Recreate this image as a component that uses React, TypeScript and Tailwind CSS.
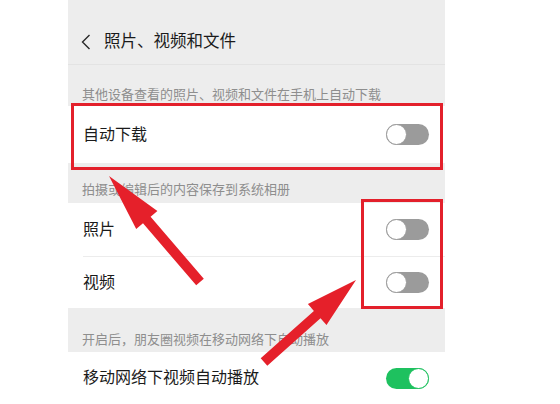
import React from "react";

type Pt = [number, number];

// polygon for a straight annotation arrow from tail to tip
const arrowPoints = (tail: Pt, tip: Pt, shaft = 10, headLen = 58, headW = 28) => {
  const dx = tip[0] - tail[0];
  const dy = tip[1] - tail[1];
  const len = Math.hypot(dx, dy);
  const ux = dx / len;
  const uy = dy / len;
  const nx = -uy;
  const ny = ux;
  const bx = tip[0] - ux * headLen;
  const by = tip[1] - uy * headLen;
  const pts: Pt[] = [
    [tail[0] + (nx * shaft) / 2, tail[1] + (ny * shaft) / 2],
    [bx + (nx * shaft) / 2, by + (ny * shaft) / 2],
    [bx + (nx * headW) / 2, by + (ny * headW) / 2],
    tip,
    [bx - (nx * headW) / 2, by - (ny * headW) / 2],
    [bx - (nx * shaft) / 2, by - (ny * shaft) / 2],
    [tail[0] - (nx * shaft) / 2, tail[1] - (ny * shaft) / 2],
  ];
  return pts.map((p) => `${p[0].toFixed(1)},${p[1].toFixed(1)}`).join(" ");
};

const Toggle = ({ on = false }: { on?: boolean }) =>
  on ? (
    <div className="flex h-[21px] w-[43px] items-center justify-end rounded-full bg-[#1ec15f]">
      <div className="h-[21px] w-[21px] rounded-full border border-[#1ec15f] bg-white" />
    </div>
  ) : (
    <div className="flex h-[21px] w-[43px] items-center rounded-full bg-[#9b9b9b]">
      <div className="h-[21px] w-[21px] rounded-full border border-[#9b9b9b] bg-white" />
    </div>
  );

const SectionHeader = ({ text, h, pb }: { text: string; h: string; pb: string }) => (
  <div className={`flex items-end px-[14px] text-[13px] leading-[18px] text-[#8e8e8e] ${h} ${pb}`}>
    {text}
  </div>
);

const Row = ({ label, h, on }: { label: string; h: string; on?: boolean }) => (
  <div className={`flex items-center justify-between bg-white pl-[15px] pr-[16px] ${h}`}>
    <span className="text-[16px] text-[#1b1b1b]">{label}</span>
    <Toggle on={on} />
  </div>
);

export default function App() {
  return (
    <div
      className="relative h-[404px] w-[560px] overflow-hidden bg-white"
      style={{ fontFamily: '"Liberation Sans", "Noto Sans CJK SC", sans-serif' }}
    >
      <div className="ml-[68px] h-full w-[377px] bg-[#ededed]">
        {/* title bar */}
        <div className="flex h-[65px] items-center gap-[13px] border-b border-[#e3e3e3] pl-[13px] pt-[19px]">
          <svg width="10" height="16" viewBox="0 0 10 16" fill="none">
            <polyline points="8.5,1 1.5,8 8.5,15" stroke="#2a2a2a" strokeWidth="1.4" />
          </svg>
          <span className="text-[16.5px] text-[#1b1b1b]">照片、视频和文件</span>
        </div>

        <SectionHeader text="其他设备查看的照片、视频和文件在手机上自动下载" h="h-[41px]" pb="pb-[2px]" />
        <Row label="自动下载" h="h-[57px]" />

        <SectionHeader text="拍摄或编辑后的内容保存到系统相册" h="h-[40px]" pb="pb-[4px]" />
        <Row label="照片" h="h-[53px]" />
        <div className="bg-white pl-[15px]">
          <div className="h-px bg-[#ececec]" />
        </div>
        <Row label="视频" h="h-[51px]" />

        <SectionHeader text="开启后，朋友圈视频在移动网络下自动播放" h="h-[44px]" pb="pb-[3px]" />
        <Row label="移动网络下视频自动播放" h="h-[52px]" on />
      </div>

      {/* annotation overlay */}
      <div className="pointer-events-none absolute left-[71px] top-[103px] h-[67px] w-[372px] border-[3px] border-[#e3202b]" />
      <div className="pointer-events-none absolute left-[361px] top-[199px] h-[110px] w-[82px] border-[3px] border-[#e3202b]" />
      <svg className="pointer-events-none absolute left-0 top-0" width="560" height="404" viewBox="0 0 560 404">
        <polygon points={arrowPoints([200, 282], [109, 176])} fill="#e5202a" />
        <polygon points={arrowPoints([264, 362], [356, 280], 10, 52, 28)} fill="#e5202a" />
      </svg>
    </div>
  );
}
